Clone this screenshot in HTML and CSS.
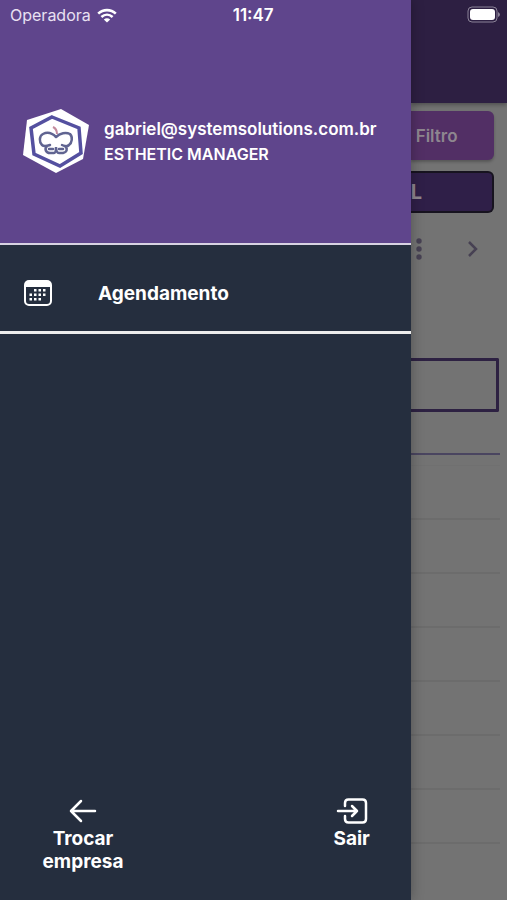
FILE: index.html
```html
<!DOCTYPE html>
<html lang="pt-BR">
<head>
<meta charset="utf-8">
<meta name="viewport" content="width=device-width, initial-scale=1">
<title>Esthetic Manager</title>
<link rel="stylesheet" href="styles.css">
</head>
<body>
<div class="app">
  <aside class="drawer">
    <header class="profile">
      <div class="status">
        <span class="carrier">Operadora
          <svg class="wifi" viewBox="0 0 20 15" aria-hidden="true">
            <path d="M1.2 5.6C6.2.9 13.8.9 18.8 5.6" />
            <path d="M4.4 9C7.8 5.9 12.2 5.9 15.6 9" />
            <path class="solid" d="M10 14.6 6.8 11.5Q10 9 13.2 11.5Z" />
          </svg>
        </span>
        <time class="clock">11:47</time>
      </div>
      <div class="account">
        <svg class="logo" viewBox="0 0 68 64" aria-hidden="true">
          <path class="plate" d="M39 0 67 16 61 50 34 64 1 46 5 11Z" />
          <path class="hexagon" d="M30 8 57 19 59 44 38 57 12 45 9 19Z" />
          <path class="apple" d="M34 28C30 24 25 23 21 25C17 27 17 33 20 36C22 38 25 37 28 36M34 28C38 24 44 23 48 25C51 28 50 34 47 36C45 38 42 37 40 36M25 37C22 40 24 44 28 44H32C34 44 34 41 34 38C34 41 35 44 37 44H41C45 43 46 40 43 37M27 40H31M37 40H41" />
          <path class="stem" d="M35 25Q35 20 31 18" />
        </svg>
        <div class="identity">
          <p class="email">gabriel@systemsolutions.com.br</p>
          <p class="company">ESTHETIC MANAGER</p>
        </div>
      </div>
    </header>
    <nav class="menu">
      <a class="menu-link" href="#agendamento">
        <svg class="calendar" viewBox="0 0 28 26" aria-hidden="true">
          <rect class="frame" x="1" y="1" width="26" height="24" rx="4" />
          <path class="top" d="M1 7V4Q1 1 4 1H24Q27 1 27 4V7Z" />
          <path class="dots" d="M10 9h2.500v2.500h-2.500zM14.500 9h2.500v2.500h-2.500zM19 9h2.500v2.500h-2.500zM5.500 13.500h2.500v2.500h-2.500zM10 13.500h2.500v2.500h-2.500zM14.500 13.500h2.500v2.500h-2.500zM19 13.500h2.500v2.500h-2.500zM5.500 18h2.500v2.500h-2.500zM10 18h2.500v2.500h-2.500zM14.500 18h2.500v2.500h-2.500z" />
        </svg>
        Agendamento
      </a>
    </nav>
    <footer class="actions">
      <button class="action" type="button">
        <svg class="arrow" viewBox="0 0 28 26" aria-hidden="true">
          <path d="M26 13H2M12 3 2 13 12 23" />
        </svg>
        Trocar empresa
      </button>
      <button class="action" type="button">
        <svg class="exit" viewBox="0 0 32 26" aria-hidden="true">
          <path d="M9 8V5Q9 1.500 12.500 1.500H26.500Q30 1.500 30 5V21Q30 24.500 26.500 24.500H12.500Q9 24.500 9 21V18M2 13H21M16 8 21 13 16 18" />
        </svg>
        Sair
      </button>
    </footer>
  </aside>
  <main class="page">
    <header class="page-bar">
      <svg class="battery" viewBox="0 0 34 18" aria-hidden="true">
        <rect class="shell" x="1" y="1" width="29" height="15" rx="4" />
        <rect class="charge" x="3" y="3" width="25" height="11" rx="3" />
        <path class="cap" d="M31 6Q33 7 33 8.500Q33 10 31 11Z" />
      </svg>
    </header>
    <div class="controls">
      <button class="filter" type="button">Filtro</button>
      <button class="professional" type="button">L</button>
      <div class="tools">
        <button class="tool" type="button" aria-label="Opções">
          <svg class="more" viewBox="0 0 8 24" aria-hidden="true"><circle cx="4" cy="4" r="2.700" /><circle cx="4" cy="12" r="2.700" /><circle cx="4" cy="20" r="2.700" /></svg>
        </button>
        <button class="tool" type="button" aria-label="Próximo">
          <svg class="next" viewBox="0 0 12 18" aria-hidden="true"><path d="M2 2 9 9 2 16" /></svg>
        </button>
      </div>
    </div>
    <div class="day"></div>
    <div class="rule"></div>
    <div class="hours">
      <div class="hour"></div><div class="hour"></div><div class="hour"></div><div class="hour"></div>
      <div class="hour"></div><div class="hour"></div><div class="hour"></div>
    </div>
  </main>
</div>
</body>
</html>
```
FILE: styles.css
```css
* { box-sizing: border-box; }

body {
  margin: 0;
  font-family: Inter, "Liberation Sans", sans-serif;
  background: #737373;
}

p { margin: 0; }

button {
  padding: 0;
  border: 0;
  background: none;
  font: inherit;
  color: inherit;
}

.app {
  display: flex;
  min-height: 100vh;
}

.drawer {
  display: flex;
  flex-direction: column;
  flex: 0 0 81%;
  z-index: 1;
  background: #252e3e;
  color: #fff;
  box-shadow: 0 0 12px rgba(0, 0, 0, 0.3);
}

.profile {
  height: 245px;
  background: #5f458c;
  border-bottom: 2px solid #d8d2e2;
}

.status {
  display: flex;
  height: 30px;
  align-items: center;
  justify-content: space-between;
  padding: 0 137px 0 10px;
  font-size: 16px;
}

.carrier {
  display: flex;
  align-items: center;
  gap: 6px;
  color: #e8e0f2;
}

.wifi {
  width: 20px;
  height: 15px;
  fill: none;
  stroke: #fff;
  stroke-width: 2.6;
}

.wifi .solid {
  fill: #fff;
  stroke: none;
}

.clock {
  font-size: 17px;
  font-weight: 600;
}

.account {
  display: flex;
  align-items: center;
  gap: 14px;
  padding: 79px 22px 0;
}

.logo {
  flex: none;
  width: 68px;
  height: 64px;
}

.plate { fill: #fff; }

.hexagon {
  fill: #fff;
  stroke: #5450a0;
  stroke-width: 3.500;
}

.apple {
  fill: none;
  stroke: #606491;
  stroke-width: 2.500;
  stroke-linecap: round;
}

.stem {
  fill: none;
  stroke: #c38a9d;
  stroke-width: 2;
}

.email {
  font-size: 17px;
  font-weight: 600;
  line-height: 26px;
}

.company {
  font-size: 16px;
  font-weight: 600;
  line-height: 24px;
}

.menu { border-bottom: 3px solid #ececec; }

.menu-link {
  display: flex;
  height: 86px;
  align-items: center;
  gap: 46px;
  padding: 10px 24px 0;
  color: #fff;
  font-size: 19px;
  font-weight: 700;
  text-decoration: none;
}

.calendar {
  width: 28px;
  height: 26px;
}

.frame {
  fill: none;
  stroke: #fff;
  stroke-width: 2;
}

.top,
.dots { fill: #fff; }

.actions {
  display: flex;
  justify-content: space-between;
  align-items: flex-start;
  margin-top: auto;
  padding: 0 9px 27px 33px;
}

.action {
  display: flex;
  flex-direction: column;
  align-items: center;
  width: 100px;
  gap: 3px;
  font-size: 19px;
  font-weight: 700;
  line-height: 23px;
}

.arrow,
.exit {
  height: 26px;
  fill: none;
  stroke: #fff;
  stroke-width: 2.500;
  stroke-linecap: round;
  stroke-linejoin: round;
}

.arrow { width: 28px; }

.exit { width: 32px; }

.page {
  flex: 1;
  min-width: 0;
}

.page-bar {
  display: flex;
  height: 103px;
  justify-content: flex-end;
  padding: 6px 6px 0;
  background: #2d1f42;
  box-shadow: 0 2px 4px rgba(0, 0, 0, 0.3);
}

.battery {
  width: 34px;
  height: 18px;
}

.shell {
  fill: none;
  stroke: #8b8297;
}

.charge { fill: #fff; }

.cap { fill: #8b8297; }

.controls {
  display: flex;
  flex-direction: column;
  padding: 8px 13px 0 0;
}

.filter,
.professional {
  border-radius: 0 6px 6px 0;
  color: #8e868f;
  text-align: left;
}

.filter {
  height: 49px;
  padding-left: 5px;
  background: #522f65;
  font-size: 17px;
  font-weight: 600;
  box-shadow: 0 2px 3px rgba(0, 0, 0, 0.25);
}

.professional {
  height: 42px;
  margin-top: 11px;
  border: 2px solid #17131f;
  border-left: 0;
  background: #2f1f48;
  font-size: 20px;
  font-weight: 700;
}

.tools {
  display: flex;
  height: 72px;
  align-items: center;
  justify-content: space-between;
  padding: 0 15px 0 4px;
}

.tool { display: flex; }

.more {
  width: 8px;
  height: 24px;
  fill: #474153;
}

.next {
  width: 12px;
  height: 18px;
  fill: none;
  stroke: #474153;
  stroke-width: 2.500;
}

.day {
  height: 54px;
  margin: 73px 8px 0 0;
  border: 3px solid #2d2142;
  border-left: 0;
  border-radius: 0 2px 2px 0;
}

.rule {
  height: 2px;
  margin: 41px 7px 0 0;
  background: #4a4560;
}

.hours {
  margin: 10px 7px 0 0;
  border-top: 1px solid #707070;
}

.hour {
  height: 54px;
  border-bottom: 2px solid #6c6c6c;
}
```
